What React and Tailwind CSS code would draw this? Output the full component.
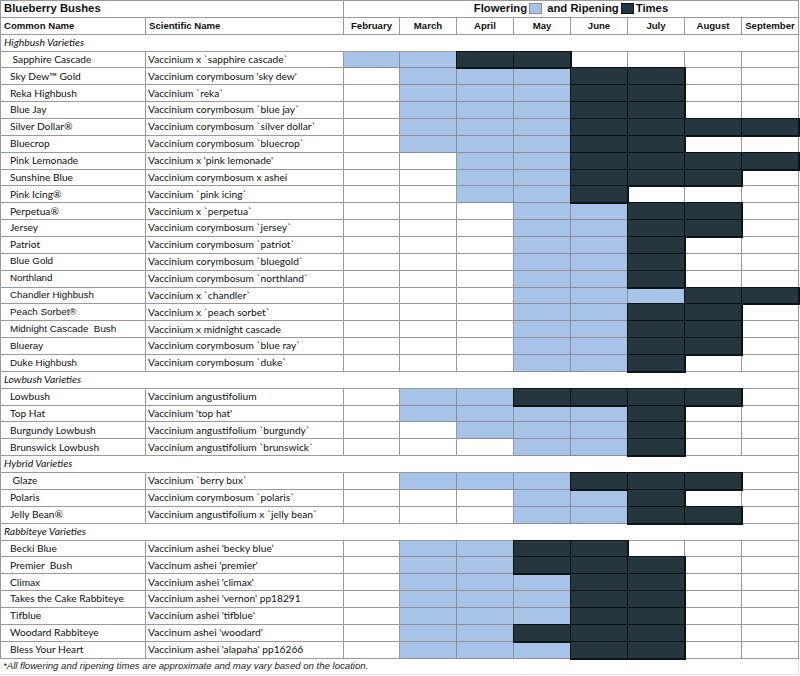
import React from 'react'

const months = ['February', 'March', 'April', 'May', 'June', 'July', 'August', 'September']

const sections = [
  {
    title: 'Highbush Varieties',
    rows: [
      [' Sapphire Cascade', 'Vaccinium x `sapphire cascade`', 'bbddwwww'],
      ['Sky Dew™ Gold', "Vaccinium corymbosum 'sky dew'", 'wbbbddww'],
      ['Reka Highbush', 'Vaccinium `reka`', 'wbbbddww'],
      ['Blue Jay', 'Vaccinium corymbosum `blue jay`', 'wbbbddww'],
      ['Silver Dollar®', 'Vaccinium corymbosum `silver dollar`', 'wbbbdddd'],
      ['Bluecrop', 'Vaccinium corymbosum `bluecrop`', 'wbbbddww'],
      ['Pink Lemonade', "Vaccinium x 'pink lemonade'", 'wwbbdddd'],
      ['Sunshine Blue', 'Vaccinium corymbosum x ashei', 'wwbbdddw'],
      ['Pink Icing®', 'Vaccinium `pink icing`', 'wwbbdwww'],
      ['Perpetua®', 'Vaccinium x `perpetua`', 'wwwbbddw'],
      ['Jersey', 'Vaccinium corymbosum `jersey`', 'wwwbbddw'],
      ['Patriot', 'Vaccinium corymbosum `patriot`', 'wwwbbdww'],
      ['Blue Gold', 'Vaccinium corymbosum `bluegold`', 'wwwbbdww', true],
      ['Northland', 'Vaccinium corymbosum `northland`', 'wwwbbdww', true],
      ['Chandler Highbush', 'Vaccinium x `chandler`', 'wwwbbbdd', true],
      ['Peach Sorbet®', 'Vaccinium x `peach sorbet`', 'wwwbbddw', true],
      ['Midnight Cascade  Bush', 'Vaccinium x midnight cascade', 'wwwbbddw', true],
      ['Blueray', 'Vaccinium corymbosum `blue ray`', 'wwwbbddw', true],
      ['Duke Highbush', 'Vaccinium corymbosum `duke`', 'wwwbbdww', true],
    ],
  },
  {
    title: 'Lowbush Varieties',
    rows: [
      ['Lowbush', 'Vaccinium angustifolium', 'wbbddddw'],
      ['Top Hat', "Vaccinium 'top hat'", 'wbbbbdww'],
      ['Burgundy Lowbush', 'Vaccinium angustifolium `burgundy`', 'wwbbbdww'],
      ['Brunswick Lowbush', 'Vaccinium angustifolium `brunswick`', 'wwwbbdww'],
    ],
  },
  {
    title: 'Hybrid Varieties',
    rows: [
      [' Glaze', 'Vaccinium `berry bux`', 'wbbbdddw'],
      ['Polaris', 'Vaccinium corymbosum `polaris`', 'wwwbbdww'],
      ['Jelly Bean®', 'Vaccinium angustifolium x `jelly bean`', 'wwwbbddw'],
    ],
  },
  {
    title: 'Rabbiteye Varieties',
    rows: [
      ['Becki Blue', 'Vaccinium ashei ‘becky blue’', 'wbbddwww'],
      ['Premier  Bush', "Vaccinum ashei 'premier'", 'wbbdddww'],
      ['Climax', "Vaccinium ashei 'climax'", 'wbbbddww'],
      ['Takes the Cake Rabbiteye', "Vaccinium ashei 'vernon' pp18291", 'wbbbddww'],
      ['Tifblue', "Vaccinium ashei 'tifblue'", 'wbbbddww'],
      ['Woodard Rabbiteye', "Vaccinum ashei 'woodard'", 'wbbdddww'],
      ['Bless Your Heart', "Vaccinium ashei 'alapaha' pp16266", 'wbbbddww'],
    ],
  },
]

const lato = { fontFamily: 'Lato, "Open Sans", sans-serif' }

function MonthCell({ kind }) {
  if (kind === 'd') {
    return <div className="relative bg-[#25363e] border-r border-b border-[#0d1417] shadow-[0_0_0_1px_#0d1417]" />
  }
  if (kind === 'b') {
    return <div className="bg-[#a8c3e8] border-r border-b border-[#8a8f98]" />
  }
  return <div className="bg-white border-r border-b border-[#9a9a9a]" />
}

export default function App() {
  return (
    <div className="w-[800px] h-[676px] bg-white text-[#111]" style={{ fontFamily: '"Liberation Sans", Arial, sans-serif' }}>
      <div className="grid w-[799px] grid-cols-[145px_198px_56px_repeat(7,57px)] auto-rows-[16.87px] border-l border-t border-[#9a9a9a]">
        {/* title row */}
        <div className="col-span-2 flex items-center pl-[3px] text-[11.3px] font-bold bg-white border-r border-b border-[#9a9a9a]">
          Blueberry Bushes
        </div>
        <div className="col-span-8 flex items-center justify-center text-[11.3px] font-bold bg-white border-r border-b border-[#9a9a9a]">
          Flowering
          <span className="inline-block w-[13px] h-[11px] bg-[#a8c3e8] border border-[#8a8f98] mx-[2px]" />
          <span className="ml-[3px]">and Ripening</span>
          <span className="inline-block w-[13px] h-[11px] bg-[#25363e] border border-[#0d1417] mx-[2px]" />
          Times
        </div>

        {/* header row */}
        <div className="flex items-center pl-[3px] text-[9.6px] font-bold bg-white border-r border-b border-[#9a9a9a]">Common Name</div>
        <div className="flex items-center pl-[3px] text-[9.6px] font-bold bg-white border-r border-b border-[#9a9a9a]">Scientific Name</div>
        {months.map((m) => (
          <div key={m} className="flex items-center justify-center text-[9.6px] font-bold bg-white border-r border-b border-[#9a9a9a]">
            {m}
          </div>
        ))}

        {sections.map((s) => (
          <React.Fragment key={s.title}>
            <div className="col-span-10 flex items-center pl-[3px] text-[10.4px] italic bg-white border-r border-b border-[#9a9a9a]" style={lato}>
              {s.title}
            </div>
            {s.rows.map(([name, sci, cells, arial]) => (
              <React.Fragment key={name}>
                <div
                  className={`flex items-center pl-[9px] whitespace-pre bg-white border-r border-b border-[#9a9a9a] ${arial ? 'text-[9.8px]' : 'text-[10.2px]'}`}
                  style={arial ? undefined : lato}
                >
                  {name}
                </div>
                <div className="flex items-center pl-[2px] whitespace-pre text-[10.2px] bg-white border-r border-b border-[#9a9a9a]" style={lato}>
                  {sci}
                </div>
                {cells.split('').map((k, i) => (
                  <MonthCell key={i} kind={k} />
                ))}
              </React.Fragment>
            ))}
          </React.Fragment>
        ))}
      </div>
      <div className="w-[799px] h-[16px] flex items-center pl-[3px] text-[9.6px] italic text-[#222] border-r border-b border-[#e2e2e2]">
        *All flowering and ripening times are approximate and may vary based on the location.
      </div>
    </div>
  )
}
